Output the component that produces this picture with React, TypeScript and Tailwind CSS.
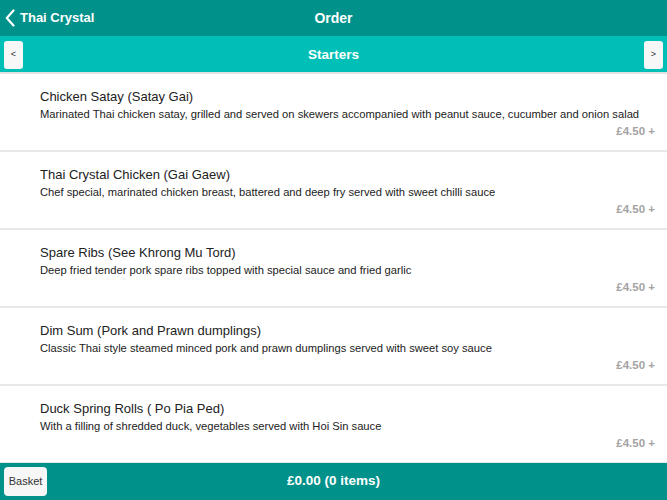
interface Dish {
  name: string
  description: string
  price: string
}

const DISHES: Dish[] = [
  {
    name: 'Chicken Satay (Satay Gai)',
    description:
      'Marinated Thai chicken satay, grilled and served on skewers accompanied with peanut sauce, cucumber and onion salad',
    price: '£4.50',
  },
  {
    name: 'Thai Crystal Chicken (Gai Gaew)',
    description: 'Chef special, marinated chicken breast, battered and deep fry served with sweet chilli sauce',
    price: '£4.50',
  },
  {
    name: 'Spare Ribs (See Khrong Mu Tord)',
    description: 'Deep fried tender pork spare ribs topped with special sauce and fried garlic',
    price: '£4.50',
  },
  {
    name: 'Dim Sum (Pork and Prawn dumplings)',
    description: 'Classic Thai style steamed minced pork and prawn dumplings served with sweet soy sauce',
    price: '£4.50',
  },
  {
    name: 'Duck Spring Rolls ( Po Pia Ped)',
    description: 'With a filling of shredded duck, vegetables served with Hoi Sin sauce',
    price: '£4.50',
  },
]

export default function App() {
  return (
    <div className="flex h-[500px] w-[667px] flex-col overflow-hidden bg-white font-['Liberation_Sans',Arial,sans-serif]">
      {/* top nav */}
      <div className="relative flex h-[36px] shrink-0 items-center justify-center bg-[#00918a] pt-[1px] text-white">
        <button className="absolute left-[5px] top-0 flex h-full items-center gap-[5px] text-[13px] font-bold">
          <svg width="10" height="18" viewBox="0 0 10 18" fill="none" stroke="currentColor" strokeWidth="2.2" strokeLinecap="round" strokeLinejoin="round">
            <polyline points="8.5,1.5 1.8,9 8.5,16.5" />
          </svg>
          <span>Thai Crystal</span>
        </button>
        <span className="text-[14px] font-bold">Order</span>
      </div>

      {/* category bar */}
      <div className="flex h-[38px] shrink-0 items-center justify-between border-b-2 border-[#e2e2e2] bg-[#00bfb6] px-[4px] pt-[2px]">
        <button className="flex h-[28px] w-[19px] items-center justify-center rounded-[3px] bg-[#f7f7f7] text-[9px] text-[#333]">
          &lt;
        </button>
        <span className="text-[13.5px] font-bold text-white">Starters</span>
        <button className="flex h-[28px] w-[19px] items-center justify-center rounded-[3px] bg-[#f7f7f7] text-[9px] text-[#333]">
          &gt;
        </button>
      </div>

      {/* dishes */}
      <div className="flex-1 overflow-hidden">
        {DISHES.map((d) => (
          <div key={d.name} className="h-[78px] border-b-2 border-[#e8e8e8] pl-[40px] pr-[12px] pt-[15px]">
            <div className="text-[13px] leading-[16px] text-[#222]">{d.name}</div>
            <div className="mt-[2px] whitespace-nowrap text-[11.2px] leading-[15px] text-[#222]">{d.description}</div>
            <div className="mt-[2px] text-right text-[11.5px] font-bold leading-[15px] text-[#a3a3a3]">
              {d.price} +
            </div>
          </div>
        ))}
      </div>

      {/* footer */}
      <div className="relative flex h-[37px] shrink-0 items-center justify-center bg-[#00918a]">
        <button className="absolute left-[4px] top-[4px] flex h-[29px] w-[43px] items-center justify-center rounded-[4px] bg-[#f7f7f7] text-[11px] text-[#333]">
          Basket
        </button>
        <span className="text-[13.5px] font-bold text-white">£0.00 (0 items)</span>
      </div>
    </div>
  )
}
